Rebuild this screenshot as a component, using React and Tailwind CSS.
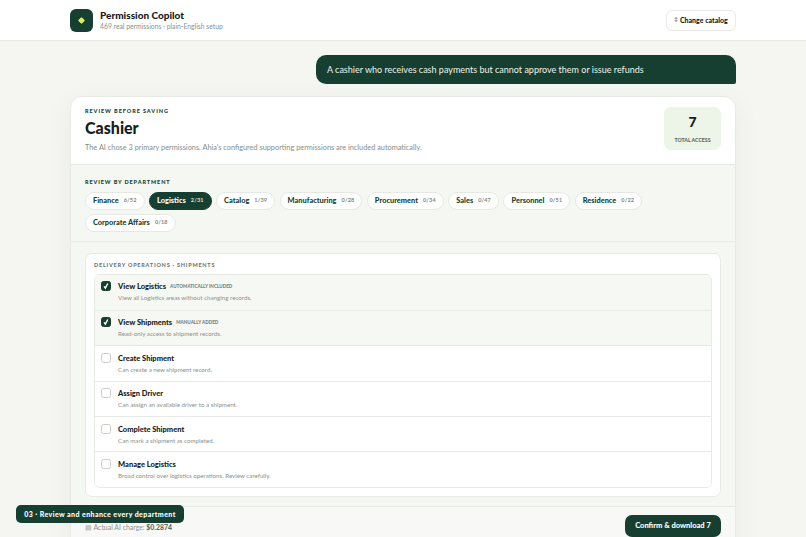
const departments = [
  ["Finance", "6/52"],
  ["Logistics", "2/31", true],
  ["Catalog", "1/39"],
  ["Manufacturing", "0/28"],
  ["Procurement", "0/34"],
  ["Sales", "0/47"],
  ["Personnel", "0/51"],
  ["Residence", "0/22"],
  ["Corporate Affairs", "0/18"],
];

const permissions = [
  { name: "View Logistics", tag: "Automatically included", desc: "View all Logistics areas without changing records.", on: true },
  { name: "View Shipments", tag: "Manually added", desc: "Read-only access to shipment records.", on: true },
  { name: "Create Shipment", desc: "Can create a new shipment record." },
  { name: "Assign Driver", desc: "Can assign an available driver to a shipment." },
  { name: "Complete Shipment", desc: "Can mark a shipment as completed." },
  { name: "Manage Logistics", desc: "Broad control over logistics operations. Review carefully." },
];

const Check = ({ on }) => (
  <span
    className={`flex h-[10px] w-[10px] shrink-0 items-center justify-center rounded-[2.5px] border ${
      on ? "border-[#173f31] bg-[#173f31]" : "border-[#c9cdc8] bg-white"
    }`}
  >
    {on && (
      <svg viewBox="0 0 10 10" className="h-[8px] w-[8px]" fill="none" stroke="#fff" strokeWidth="1.8">
        <path d="M2.6 5.4 4.2 7.6 7.2 1.9" />
      </svg>
    )}
  </span>
);

export default function App() {
  return (
    <div className="relative h-[537px] overflow-hidden bg-[#f5f6f2] font-['Lato',sans-serif] text-[#17211c]">
      <header className="flex h-[41px] items-center justify-between border-b border-[#e6e8e3] bg-white pl-[70px] pr-[70px]">
        <div className="flex items-center gap-[7px]">
          <div className="flex h-[23px] w-[23px] items-center justify-center rounded-[6px] bg-[#173f31]">
            <span className="h-[5px] w-[5px] rotate-45 rounded-[1px] bg-[#d4f06a]" />
          </div>
          <div>
            <div className="text-[10px] leading-[13px] font-black">Permission Copilot</div>
            <div className="text-[6.8px] leading-[9px] text-[#8b918c]">469 real permissions · plain-English setup</div>
          </div>
        </div>
        <button className="flex h-[21px] w-[70px] items-center justify-center gap-[2px] rounded-[6px] border border-[#e8eae6] bg-white text-[7px] font-black">
          <span className="text-[5px] font-normal">↕</span>
          Change catalog
        </button>
      </header>

      <main className="px-[70px] pt-[14px]">
        <div className="flex justify-end">
          <div className="flex h-[29px] w-[420px] items-center rounded-[10px] rounded-br-[2px] bg-[#173f31] px-[11px] text-[9px] text-[#eef3ea]">
            A cashier who receives cash payments but cannot approve them or issue refunds
          </div>
        </div>

        <section className="mt-[12px] overflow-hidden rounded-[12px] border border-[#e8eae6] bg-white shadow-[0_8px_30px_rgba(20,40,30,0.05)]">
          <div className="flex h-[68px] justify-between border-b border-[#e8eae6] pl-[14px] pr-[14px] pt-[10px]">
            <div>
              <div className="text-[5.5px] leading-[8px] font-black tracking-[0.17em] text-[#173f31] uppercase">Review before saving</div>
              <h1 className="mt-[3px] text-[16px] leading-[20px] font-black">Cashier</h1>
              <p className="mt-[5px] text-[7.35px] leading-[9px] text-[#878d88]">
                The AI chose 3 primary permissions. Ahia's configured supporting permissions are included automatically.
              </p>
            </div>
            <div className="flex h-[43px] w-[57px] flex-col items-center rounded-[7px] bg-[#edf4e8] pt-[7px]">
              <div className="text-[14px] leading-[16px] font-black">7</div>
              <div className="mt-[7px] text-[5.2px] leading-[6px] font-black text-[#5f6a64] uppercase">Total access</div>
            </div>
          </div>

          <div className="h-[77px] border-b border-[#e8eae6] bg-[#f4f7f2] px-[14px] pt-[13px]">
            <div className="text-[5.5px] leading-[8px] font-black tracking-[0.16em] text-[#173f31] uppercase">Review by department</div>
            <div className="mt-[5.5px] flex flex-wrap gap-x-[4.5px] gap-y-[4px]">
              {departments.map(([name, count, active]) => (
                <div
                  key={name}
                  className={`flex h-[18px] items-center gap-[5px] rounded-full border px-[7px] ${
                    active ? "border-[#173f31] bg-[#173f31] text-white" : "border-[#e6e9e3] bg-white text-[#173f31]"
                  }`}
                >
                  <span className="text-[7.4px] font-black">{name}</span>
                  <span className={`text-[5.5px] font-bold tracking-[0.03em] ${active ? "text-[#dbe6df]" : "text-[#7f8782]"}`}>{count}</span>
                </div>
              ))}
            </div>
          </div>

          <div className="h-[265px] border-b border-[#e8eae6] bg-[#f4f7f2] px-[14px] pt-[11px]">
            <div className="rounded-[7px] border border-[#e8eae6] bg-white px-[8px] pt-[7px] pb-[8px]">
              <div className="text-[5.5px] leading-[8px] font-black tracking-[0.14em] text-[#6f7772] uppercase">Delivery operations · Shipments</div>
              <div className="mt-[4.5px] overflow-hidden rounded-[6px] border border-[#e8eae6]">
                {permissions.map((p, i) => (
                  <div
                    key={p.name}
                    className={`flex h-[35.4px] gap-[7px] px-[6px] pt-[6.5px] ${i > 0 ? "border-t border-[#e8eae6]" : ""} ${p.on ? "bg-[#f6f9f3]" : "bg-white"}`}
                  >
                    <Check on={p.on} />
                    <div>
                      <div className="flex items-center gap-[4px] text-[7.5px] leading-[11px] font-black">
                        {p.name}
                        {p.tag && <span className="text-[4.6px] font-black text-[#7b827d] uppercase">{p.tag}</span>}
                      </div>
                      <div className="mt-[1px] text-[6.2px] leading-[9px] text-[#8b918c]">{p.desc}</div>
                    </div>
                  </div>
                ))}
              </div>
            </div>
          </div>

          <div className="flex h-[60px] items-start justify-between bg-[#f8f9f6] pl-[14px] pr-[14px] pt-[8px]">
            <div className="mt-[7px] text-[6.9px] text-[#8b918c]">
              <span className="text-[#a5aaa6]">▤</span> Actual AI charge: <span className="font-black text-[#5f6a64]">$0.2874</span>
            </div>
            <button className="flex h-[22px] w-[96px] items-center justify-center rounded-[7px] bg-[#173f31] text-[7.5px] font-black text-white">
              Confirm &amp; download 7
            </button>
          </div>
        </section>
      </main>

      <div className="absolute top-[505px] left-[16px] flex h-[18px] w-[168px] items-center justify-center rounded-[5px] bg-[#173f31] text-[7px] font-black tracking-[0.06em] text-white">
        03 · Review and enhance every department
      </div>
    </div>
  );
}
